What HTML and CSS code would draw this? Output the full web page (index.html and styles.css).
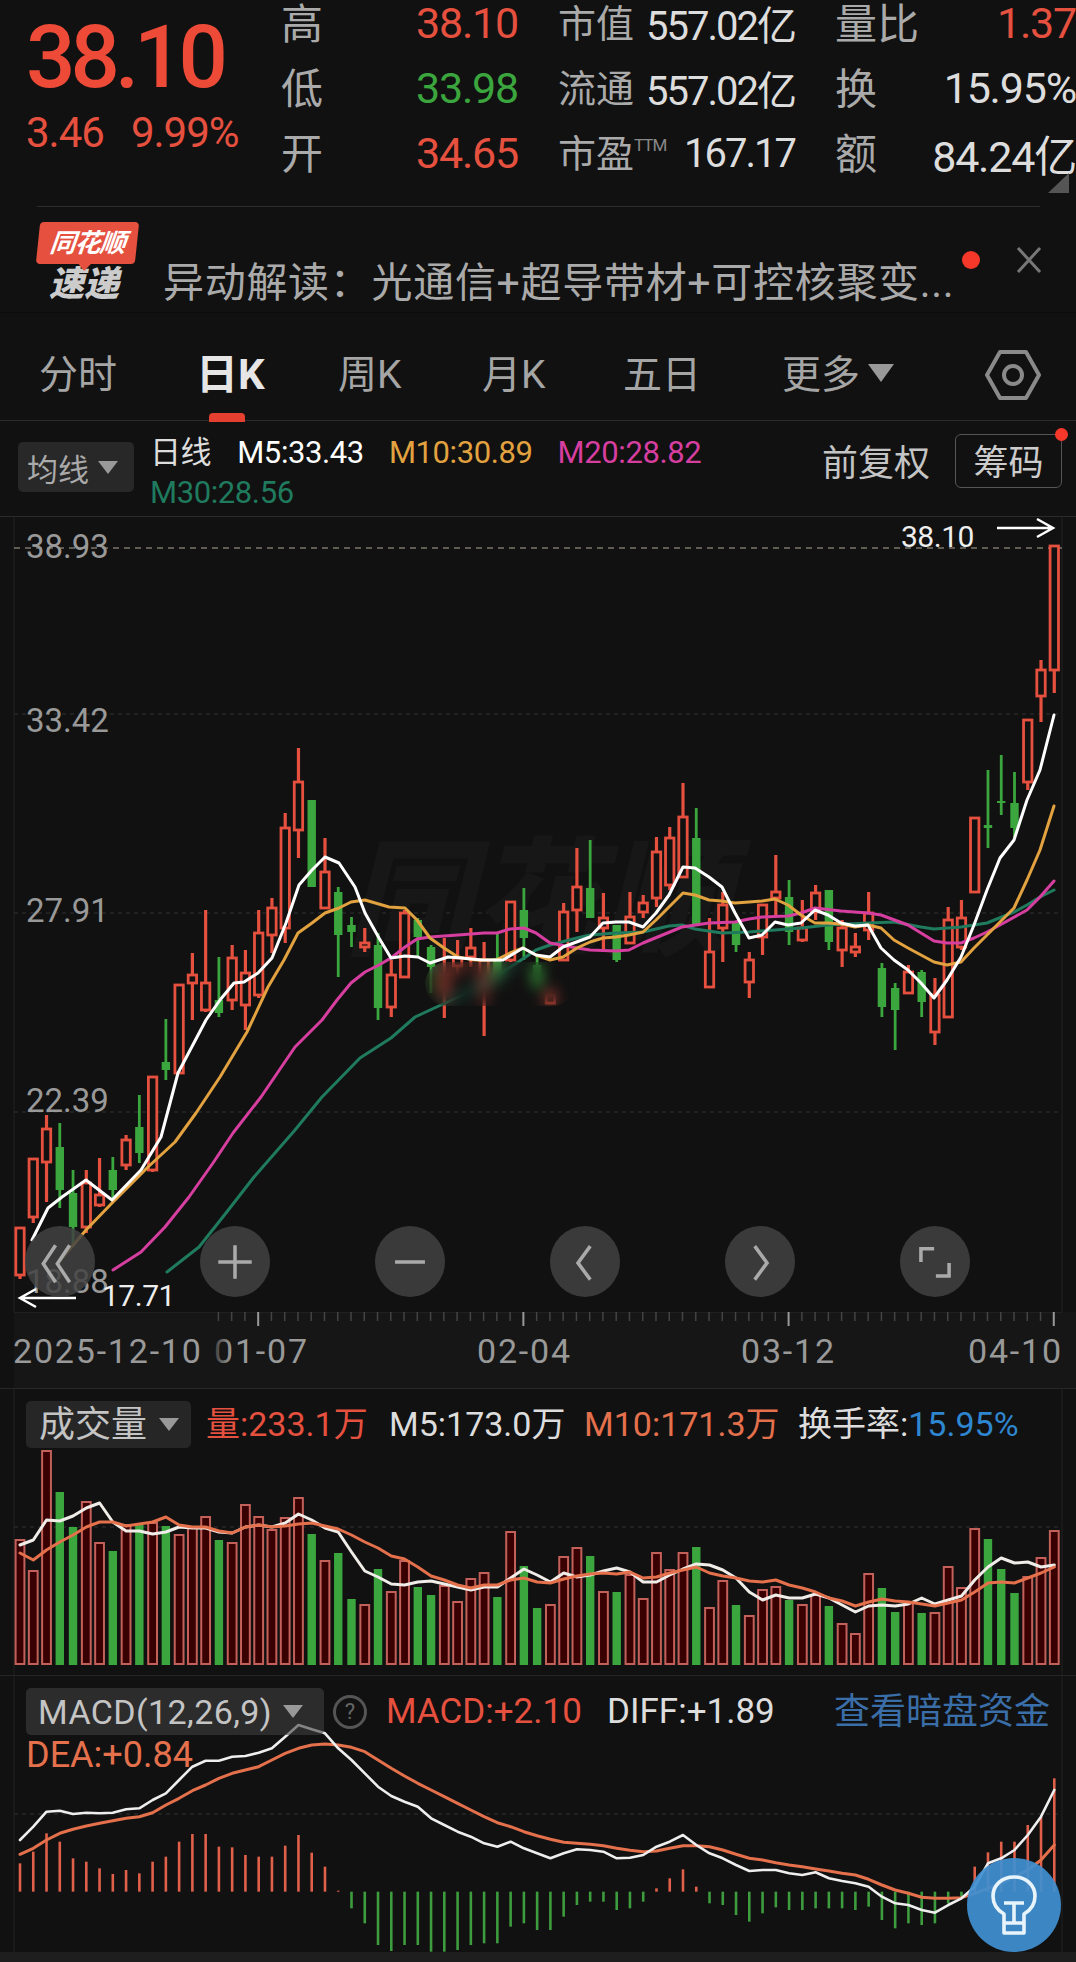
FILE: index.html
```html
<!DOCTYPE html>
<html lang="zh-CN">
<head>
    <meta charset="UTF-8">
    <meta name="viewport" content="width=device-width, initial-scale=1.0">
    <title>日K</title>
    <link rel="stylesheet" href="styles.css">
</head>
<body>
    <header class="quote">
        <div class="last">
            <div class="price">38.10</div>
            <div class="change"><span>3.46</span><span>9.99%</span></div>
        </div>
        <div class="stats">
            <div class="stat big"><span>高</span><b class="up">38.10</b></div>
            <div class="stat"><span>市值</span><b>557.02亿</b></div>
            <div class="stat big"><span>量比</span><b class="up">1.37</b></div>
            <div class="stat big"><span>低</span><b class="down">33.98</b></div>
            <div class="stat"><span>流通</span><b>557.02亿</b></div>
            <div class="stat big"><span>换</span><b>15.95%</b></div>
            <div class="stat big"><span>开</span><b class="up">34.65</b></div>
            <div class="stat"><span>市盈<sup>TTM</sup></span><b>167.17</b></div>
            <div class="stat big"><span>额</span><b>84.24亿</b></div>
        </div>
        <div class="corner"></div>
    </header>
    <div class="divider"></div>

    <section class="notice">
        <div class="logo">
            <div class="logo-top">同花顺</div>
            <div class="logo-bottom">速递</div>
        </div>
        <p class="notice-text">异动解读：光通信+超导带材+可控核聚变...</p>
        <span class="notice-dot"></span>
        <svg class="notice-close" viewBox="0 0 26 26"><path d="M2 1 L24 25 M24 1 L2 25"/></svg>
    </section>

    <nav class="tabs">
        <span class="tab tab-fs">分时</span>
        <span class="tab tab-day active">日K</span>
        <span class="tab tab-week">周K</span>
        <span class="tab tab-month">月K</span>
        <span class="tab tab-five">五日</span>
        <span class="tab tab-more">更多<i class="tri"></i></span>
        <svg class="gear" viewBox="0 0 56 52"><path d="M15 3 H41 L54 26 L41 49 H15 L2 26 Z"/><circle cx="28" cy="26" r="9"/></svg>
    </nav>

    <section class="ma-legend">
        <div class="drop drop-ma">均线<i class="tri"></i></div>
        <div class="ma-values">
            <span class="ma-title">日线</span>
            <span class="c-white">M5:33.43</span>
            <span class="c-orange">M10:30.89</span>
            <span class="c-pink">M20:28.82</span>
            <span class="c-teal">M30:28.56</span>
        </div>
        <span class="adjust">前复权</span>
        <span class="chips">筹码</span>
    </section>

    <section class="panel k-panel">
        <svg class="chart" viewBox="0 517 1076 795" width="1076" height="795">
            <line class="frame" x1="14" y1="517" x2="14" y2="1312"/>
            <line class="frame" x1="1062" y1="517" x2="1062" y2="1312"/>
            <line class="grid-hi" x1="14" y1="548" x2="1062" y2="548"/>
            <line class="grid" x1="14" y1="714" x2="1062" y2="714"/>
            <line class="grid" x1="14" y1="913" x2="1062" y2="913"/>
            <line class="grid" x1="14" y1="1112" x2="1062" y2="1112"/>
            <text class="watermark" x="345" y="945">同花顺</text>
            <g id="k-plot"></g>
            <text class="axis-num" x="26" y="558">38.93</text>
            <text class="axis-num" x="26" y="732">33.42</text>
            <text class="axis-num" x="26" y="922">27.91</text>
            <text class="axis-num" x="26" y="1112">22.39</text>
            <text class="axis-num" x="26" y="1293">18.88</text>
            <text class="mark-num" x="901" y="547">38.10</text>
            <path class="mark-arrow" d="M997 528 H1053 M1037 519 L1053 528 L1037 537"/>
            <text class="mark-num" x="102" y="1306">17.71</text>
            <path class="mark-arrow" d="M76 1298 H20 M36 1289 L20 1298 L36 1307"/>
        </svg>
        <div class="smudge"></div>
        <div class="zoom-bar">
            <span class="round"><svg viewBox="0 0 50 50"><path d="M20 6 L6 27 L20 48 M36 6 L22 27 L36 48"/></svg></span>
            <span class="round"><svg viewBox="0 0 50 50"><path d="M25 6 V44 M6 25 H44"/></svg></span>
            <span class="round"><svg viewBox="0 0 50 50"><path d="M8 25 H42"/></svg></span>
            <span class="round"><svg viewBox="0 0 50 50"><path d="M31 7 L17 26 L31 45"/></svg></span>
            <span class="round"><svg viewBox="0 0 50 50"><path d="M19 7 L33 26 L19 45"/></svg></span>
            <span class="round"><svg viewBox="0 0 50 50"><path d="M24 10 H9 V25 M41 26 V41 H26"/></svg></span>
        </div>
    </section>

    <section class="time-axis">
        <svg viewBox="0 1312 1076 76" width="1076" height="76">
            <defs>
                <linearGradient id="fade">
                    <stop offset="0" stop-color="#161616"/>
                    <stop offset="1" stop-color="#161616" stop-opacity="0"/>
                </linearGradient>
            </defs>
            <g id="ticks"></g>
            <text class="date" x="214" y="1363">01-07</text>
            <rect x="207" y="1330" width="24" height="40" fill="url(#fade)"/>
            <text class="date" x="13" y="1363">2025-12-10</text>
            <text class="date" x="477" y="1363">02-04</text>
            <text class="date" x="741" y="1363">03-12</text>
            <text class="date" x="968" y="1363">04-10</text>
        </svg>
    </section>

    <section class="panel vol-panel">
        <svg class="chart" viewBox="0 1389 1076 286" width="1076" height="286">
            <line class="frame" x1="14" y1="1389" x2="14" y2="1675"/>
            <line class="frame" x1="1062" y1="1389" x2="1062" y2="1675"/>
            <line class="grid" x1="14" y1="1527" x2="1062" y2="1527"/>
            <g id="vol-plot"></g>
        </svg>
        <div class="legend">
            <div class="drop drop-vol">成交量<i class="tri"></i></div>
            <span class="v1 c-red">量:233.1万</span>
            <span class="v2 c-light">M5:173.0万</span>
            <span class="v3 c-coral">M10:171.3万</span>
            <span class="v4 c-light">换手率:<em class="c-blue">15.95%</em></span>
        </div>
    </section>

    <section class="panel macd-panel">
        <svg class="chart" viewBox="0 1676 1076 276" width="1076" height="276">
            <line class="frame" x1="14" y1="1676" x2="14" y2="1952"/>
            <line class="frame" x1="1062" y1="1676" x2="1062" y2="1952"/>
            <line class="grid" x1="14" y1="1814" x2="1062" y2="1814"/>
            <g id="macd-plot"></g>
        </svg>
        <div class="legend macd-legend">
            <div class="drop drop-macd">MACD(12,26,9)<i class="tri"></i></div>
            <span class="help">?</span>
            <span class="m1 c-red">MACD:+2.10</span>
            <span class="m2 c-light">DIFF:+1.89</span>
            <span class="m3">查看暗盘资金</span>
            <span class="m4 c-coral">DEA:+0.84</span>
        </div>
        <svg class="tip" viewBox="0 0 94 94">
            <circle cx="47" cy="47" r="47"/>
            <path d="M37 75 V56 C30 52 26 45 26 38 C26 27 35 19 47 19 C59 19 68 27 68 38 C68 45 64 52 57 56 V75 Z M37 45 H57 M47 45 V65 M37 65 H57"/>
        </svg>
    </section>
    <div class="bottom-band"></div>

    <script src="chart.js"></script>
</body>
</html>
```

FILE: styles.css
```css
* {
    box-sizing: border-box;
}

body {
    font-family: Roboto, "Noto Sans CJK SC", sans-serif;
    margin: 0;
    width: 1076px;
    height: 1962px;
    overflow: hidden;
    background-color: #111;
    color: #aaa;
}

.up, .c-red { color: #e5503f; }
.down { color: #3aa63d; }
.c-white { color: #fff; }
.c-light { color: #ddd; }
.c-orange { color: #e2a23f; }
.c-pink { color: #d63ea0; }
.c-teal { color: #1f7a5e; }
.c-coral { color: #e4704c; }
.c-blue { color: #2f86d0; font-style: normal; }

.tri {
    display: inline-block;
    width: 0;
    height: 0;
    border-left: 10px solid transparent;
    border-right: 10px solid transparent;
    border-top: 13px solid #999;
}

/* top quote */
.quote {
    position: relative;
    display: flex;
    height: 206px;
}

.last {
    width: 281px;
    padding-left: 26px;
    color: #ee4a38;
}

.price {
    font-size: 87px;
    line-height: 87px;
    font-weight: 500;
    letter-spacing: -5px;
    margin-top: 14px;
}

.change {
    display: flex;
    gap: 27px;
    font-size: 42px;
    line-height: 42px;
    letter-spacing: -1px;
    margin-top: 11px;
    color: #e5503f;
}

.stats {
    display: grid;
    grid-template-columns: 237px 237px 241px;
    grid-auto-rows: 46px;
    column-gap: 40px;
    row-gap: 19px;
}

.stat {
    display: flex;
    justify-content: space-between;
    align-items: center;
    font-size: 38px;
    white-space: nowrap;
}

.stat span {
    margin-top: -6px;
}

.stat.big span {
    font-size: 42px;
}

.stat b {
    font-weight: 400;
    font-size: 40px;
    letter-spacing: -2px;
    color: #ddd;
}

.stat.big b {
    font-size: 43px;
    letter-spacing: -1.2px;
}

.stat b.up { color: #e5503f; }
.stat b.down { color: #3aa63d; }

.stat sup {
    font-size: 17px;
    letter-spacing: -1px;
    vertical-align: 16px;
    line-height: 0;
    color: #888;
}

.corner {
    position: absolute;
    right: 7px;
    top: 173px;
    width: 0;
    height: 0;
    border-left: 21px solid transparent;
    border-bottom: 20px solid #555;
}

.divider {
    height: 1px;
    margin: 0 36px 0 37px;
    background-color: #2c2c2c;
}

/* notice */
.notice {
    position: relative;
    display: flex;
    align-items: flex-end;
    height: 106px;
    padding: 0 0 6px 38px;
    border-bottom: 1px solid #0c0c0c;
}

.logo {
    width: 100px;
    margin-bottom: 3px;
}

.logo-top {
    position: relative;
    width: 99px;
    height: 42px;
    background-color: #e5503f;
    border-radius: 4px;
    transform: skewX(-6deg);
    color: #fff;
    font-size: 26px;
    line-height: 42px;
    font-weight: 700;
    font-style: italic;
    text-align: center;
    letter-spacing: -1px;
}

.logo-top::after {
    content: "";
    position: absolute;
    left: 42px;
    bottom: -7px;
    border-left: 7px solid transparent;
    border-right: 7px solid transparent;
    border-top: 8px solid #e5503f;
}

.logo-bottom {
    padding-left: 11px;
    margin-top: 3px;
    color: #ccc;
    font-size: 35px;
    line-height: 36px;
    font-weight: 900;
    font-style: italic;
}

.notice-text {
    margin: 0 0 0 25px;
    font-size: 41px;
    letter-spacing: 0.7px;
    line-height: 46px;
    white-space: nowrap;
    color: #aaa;
}

.notice-dot {
    position: absolute;
    left: 962px;
    top: 44px;
    width: 18px;
    height: 18px;
    border-radius: 50%;
    background-color: #f5382a;
}

.notice-close {
    position: absolute;
    left: 1016px;
    top: 40px;
    width: 26px;
    height: 26px;
}

.notice-close path {
    fill: none;
    stroke: #777;
    stroke-width: 3;
}

/* tabs */
.tabs {
    position: relative;
    display: flex;
    align-items: center;
    height: 108px;
    padding: 8px 0 0 39px;
    border-bottom: 1px solid #2b2b2b;
    font-size: 39px;
    color: #a5a5a5;
}

.tab {
    position: relative;
    white-space: nowrap;
}

.tab-fs { width: 157px; }
.tab-day { width: 142px; }
.tab-week { width: 144px; }
.tab-month { width: 141px; }
.tab-five { width: 159px; }
.tab-more { display: flex; align-items: center; gap: 8px; }

.tab.active {
    color: #e6e6e6;
    font-weight: 700;
    font-size: 42px;
}

.tab.active::after {
    content: "";
    position: absolute;
    left: 13px;
    top: 73px;
    width: 36px;
    height: 9px;
    border-radius: 4px 4px 0 0;
    background-color: #e5402f;
}

.tab-more .tri {
    border-left-width: 13px;
    border-right-width: 13px;
    border-top-width: 18px;
    margin-top: 4px;
}

.gear {
    position: absolute;
    left: 985px;
    top: 36px;
    width: 56px;
    height: 52px;
}

.gear path, .gear circle {
    fill: none;
    stroke: #8a8a8a;
    stroke-width: 4;
    stroke-linejoin: round;
}

/* MA legend */
.ma-legend {
    position: relative;
    height: 95px;
}

.drop {
    position: absolute;
    display: flex;
    align-items: center;
    border-radius: 5px;
    background-color: #282828;
    color: #aaa;
}

.drop-ma {
    left: 18px;
    top: 21px;
    width: 116px;
    height: 50px;
    gap: 9px;
    padding-left: 9px;
    font-size: 31px;
}

.ma-values {
    position: absolute;
    left: 150px;
    top: 12px;
    width: 580px;
    display: flex;
    flex-wrap: wrap;
    column-gap: 25px;
    font-size: 31px;
    line-height: 40px;
    letter-spacing: -0.4px;
}

.ma-title {
    margin-right: 1px;
    color: #ddd;
}

.adjust {
    position: absolute;
    left: 822px;
    top: 18px;
    font-size: 36px;
    line-height: 50px;
    color: #c4c4c4;
}

.chips {
    position: absolute;
    left: 955px;
    top: 13px;
    width: 107px;
    height: 54px;
    border: 1px solid #555;
    border-radius: 6px;
    font-size: 35px;
    line-height: 58px;
    text-align: center;
    color: #ccc;
}

.chips::after {
    content: "";
    position: absolute;
    right: -7px;
    top: -7px;
    width: 13px;
    height: 13px;
    border-radius: 50%;
    background-color: #f5382a;
}

/* chart panels: svg and overlays share one grid cell */
.panel {
    position: relative;
    display: grid;
}

.panel > * {
    grid-area: 1 / 1;
}

.chart {
    display: block;
    overflow: visible;
}

.k-panel {
    height: 796px;
    border-top: 1px solid #2b2b2b;
}

.vol-panel {
    height: 286px;
}

.macd-panel {
    height: 277px;
    border-top: 1px solid #262626;
    overflow: hidden;
}

.frame {
    stroke: #222;
    stroke-width: 1;
}

.grid {
    stroke: #333;
    stroke-width: 1;
    stroke-dasharray: 4 4;
}

.grid-hi {
    stroke: #b0a898;
    stroke-width: 1;
    stroke-dasharray: 6 5;
}

.watermark {
    font-size: 128px;
    font-weight: 900;
    font-style: italic;
    fill: #171717;
}

.axis-num {
    font-size: 33px;
    fill: #999;
}

.mark-num {
    font-size: 30px;
    letter-spacing: -0.5px;
    fill: #eee;
}

.mark-arrow {
    fill: none;
    stroke: #fff;
    stroke-width: 2.5;
}

.smudge {
    position: absolute;
    left: 425px;
    top: 445px;
    width: 150px;
    height: 44px;
    border-radius: 22px;
    backdrop-filter: blur(7px);
}

.zoom-bar {
    display: flex;
    gap: 105px;
    align-self: end;
    padding: 0 0 15px 25px;
}

.round {
    display: flex;
    align-items: center;
    justify-content: center;
    width: 70px;
    height: 71px;
    border-radius: 50%;
    background-color: rgba(66, 66, 66, 0.85);
}

.round svg {
    width: 44px;
    height: 44px;
}

.round path {
    fill: none;
    stroke: #aaa;
    stroke-width: 4;
}

/* time axis */
.time-axis {
    height: 77px;
    background: linear-gradient(to right, #111 14px, #161616 14px);
    border-bottom: 1px solid #272727;
}

.time-axis svg {
    display: block;
}

.date {
    font-size: 34px;
    letter-spacing: 1.8px;
    fill: #999;
}

/* legends above volume and MACD */
.legend {
    position: relative;
    font-size: 34px;
    line-height: 44px;
    white-space: nowrap;
}

.legend > span {
    position: absolute;
    top: 13px;
}

.drop-vol {
    left: 26px;
    top: 12px;
    width: 165px;
    height: 47px;
    gap: 12px;
    padding-left: 13px;
    font-size: 36px;
    color: #c4c4c4;
    background-color: #262626;
}

.v1 { left: 206px; }
.v2 { left: 389px; }
.v3 { left: 584px; }
.v4 { left: 798px; }

.drop-macd {
    left: 26px;
    top: 12px;
    width: 298px;
    height: 47px;
    padding-left: 12px;
    gap: 11px;
    font-size: 34px;
    letter-spacing: 0.4px;
    color: #c4c4c4;
    background-color: rgba(64, 64, 64, 0.6);
}

.help {
    left: 333px;
    width: 34px;
    height: 34px;
    top: 19px !important;
    border: 3px solid #555;
    border-radius: 50%;
    font-size: 22px;
    line-height: 28px;
    text-align: center;
    color: #666;
}

.legend > .m1, .legend > .m2, .legend > .m3 {
    top: 14px;
    font-size: 35px;
}

.m1 { left: 386px; }
.m2 { left: 607px; }
.legend > .m3 { left: 834px; font-size: 36px; color: #3a6ea8; }
.legend > .m4 { left: 26px; top: 57px; font-size: 36px; }

.tip {
    position: absolute;
    left: 967px;
    top: 182px;
    width: 94px;
    height: 94px;
}

.tip circle {
    fill: #3f8fd1;
    fill-opacity: 0.93;
}

.tip path {
    fill: none;
    stroke: #e8f4fb;
    stroke-width: 3.6;
    stroke-linejoin: round;
}

.bottom-band {
    height: 20px;
    background-color: #1e1e1e;
}
```

FILE: chart.js
```js
const RED = "#e5503f";
const GREEN = "#3aa63d";
const SVG_NS = "http://www.w3.org/2000/svg";

const slotX = i => 20 + 13.26 * i;

function add(parent, tag, attrs) {
    const el = document.createElementNS(SVG_NS, tag);
    for (const key in attrs) {
        el.setAttribute(key, attrs[key]);
    }
    parent.appendChild(el);
    return el;
}

function line(parent, points, color, width) {
    add(parent, "polyline", {
        points: points,
        fill: "none",
        stroke: color,
        "stroke-width": width,
        "stroke-linejoin": "round",
        "stroke-linecap": "round"
    });
}

// one y value per day -> polyline points
const byDay = (values, toY) => values.map((v, i) => slotX(i).toFixed(1) + "," + toY(v).toFixed(1)).join(" ");

// [up?, high, open/close top, open/close bottom, low], y in page pixels
const candles = [
    [1,1228,1228,1275,1279],[1,1159,1159,1217,1223],[1,1115,1129,1162,1202],[0,1123,1147,1190,1208],
    [0,1170,1193,1227,1247],[1,1170,1183,1227,1233],[1,1158,1195,1205,1207],[0,1157,1170,1190,1202],
    [1,1135,1140,1165,1170],[0,1095,1127,1153,1163],[1,1076,1077,1170,1172],[0,1019,1062,1070,1080],
    [1,985,985,1073,1073],[1,953,975,983,1020],[1,910,983,1010,1012],[0,957,1000,1013,1017],
    [1,945,958,1000,1010],[1,950,973,1005,1030],[1,910,933,995,998],[1,898,908,935,953],
    [1,813,828,928,943],[1,748,782,830,858],[0,800,800,887,887],[1,838,872,908,908],
    [0,887,892,935,977],[0,917,925,932,947],[1,928,943,947,952],[0,933,945,1008,1020],
    [1,960,975,1007,1017],[1,910,913,977,977],[0,918,920,937,957],[0,945,947,967,993],
    [1,938,975,990,1018],[1,940,958,966,975],[1,928,948,957,967],[1,942,960,985,1036],
    [0,933,958,975,985],[1,902,902,960,962],[0,888,910,938,960],[0,955,965,985,990],
    [1,988,995,1003,1004],[1,903,912,960,960],[1,848,887,910,932],[0,840,888,918,918],
    [1,893,918,928,950],[0,925,925,960,962],[1,892,917,943,943],[1,895,903,912,918],
    [1,837,852,898,907],[1,827,838,885,890],[1,783,817,877,877],[0,808,838,925,925],
    [1,918,952,987,987],[1,892,905,928,962],[0,922,922,945,952],[1,952,960,982,998],
    [1,905,905,937,955],[1,855,892,898,917],[0,880,897,932,945],[1,900,928,940,942],
    [1,885,893,912,920],[0,890,890,942,950],[1,920,928,950,967],[1,933,947,952,957],
    [1,892,913,930,940],[0,963,968,1007,1017],[0,983,988,1010,1050],[1,965,972,993,993],
    [0,970,972,1002,1017],[1,978,995,1032,1045],[1,907,920,1017,1018],[1,900,918,947,950],
    [1,818,818,892,892],[0,770,825,828,848],[0,755,801,803,815],[0,772,803,828,837],
    [1,720,720,782,790],[1,660,670,696,722],[1,546,546,670,693]
];

const m5 = "32,1240 48,1208 62,1197 86,1180 112,1200 141,1170 161,1137 178,1073 206,1020 220,1000 234,983 244,982 258,973 272,958 286,923 299,885 312,870 325,857 339,863 355,887 365,913 379,938 391,958 405,956 418,957 430,963 448,957 461,958 482,960 503,960 523,948 536,955 550,957 563,947 590,937 603,923 616,922 629,922 643,927 656,913 669,895 683,867 695,868 709,877 722,887 735,913 749,938 762,935 775,922 788,925 801,923 815,910 828,915 841,923 855,926 868,925 881,948 894,960 908,970 921,983 934,998 947,980 961,957 974,925 987,890 1000,858 1014,840 1027,800 1040,770 1054,715";
const m10 = "58,1263 86,1230 113,1202 148,1167 175,1142 196,1113 220,1077 247,1032 268,987 284,960 298,933 312,923 325,913 339,908 351,902 365,900 389,907 405,908 417,920 430,938 444,948 458,957 475,960 496,960 510,953 523,948 536,955 550,960 563,957 577,948 590,942 603,938 616,937 629,935 643,932 656,920 669,907 683,893 695,895 709,900 722,901 735,903 749,902 762,901 775,899 788,905 801,915 815,923 828,923 841,924 855,927 868,925 881,928 894,940 908,948 921,955 934,962 947,965 961,962 974,948 987,935 1000,922 1014,908 1027,880 1040,850 1054,806";
const m20 = "113,1270 141,1252 165,1227 189,1197 213,1163 233,1133 261,1097 295,1047 322,1020 337,1000 351,983 365,972 379,965 391,958 405,947 417,939 430,937 458,935 484,933 497,933 510,929 524,928 536,933 550,943 577,948 590,950 616,951 629,950 643,943 682,927 709,923 735,922 749,919 762,917 788,916 801,913 815,908 841,911 868,913 881,915 908,925 934,941 947,943 961,943 974,938 987,932 1000,925 1027,910 1040,897 1054,881";
const m30 = "167,1272 199,1247 226,1213 254,1177 295,1130 322,1097 360,1058 391,1038 415,1017 458,997 496,977 536,950 550,945 577,938 590,935 616,933 643,932 669,926 682,925 695,929 722,933 749,932 775,930 801,928 828,925 868,923 894,922 921,927 934,929 961,927 987,923 1014,912 1027,905 1040,897 1054,890";

const k = document.getElementById("k-plot");
candles.forEach((c, i) => {
    const x = slotX(i);
    const color = c[0] ? RED : GREEN;
    add(k, "line", { x1: x, x2: x, y1: c[1], y2: c[4], stroke: color, "stroke-width": c[0] ? 3.2 : 2.8 });
    if (c[0]) {
        add(k, "rect", { x: x - 4.2, y: c[2], width: 8.4, height: Math.max(c[3] - c[2], 1), fill: "#111", stroke: color, "stroke-width": 2.8 });
    } else {
        add(k, "rect", { x: x - 4.2, y: c[2], width: 8.4, height: Math.max(c[3] - c[2], 2), fill: color });
    }
});
line(k, m30, "#1f7a5e", 3);
line(k, m20, "#d63ea0", 3);
line(k, m10, "#e2a23f", 3);
line(k, m5, "#fff", 3);

// date axis ticks
const ticks = document.getElementById("ticks");
add(ticks, "line", { x1: 14, x2: 1062, y1: 1312, y2: 1312, stroke: "#2b2b2b" });
for (let i = 15; i <= 78; i++) {
    const major = [18, 38, 58, 78].includes(i);
    add(ticks, "line", {
        x1: slotX(i) - 0.5, x2: slotX(i) - 0.5, y1: 1312, y2: major ? 1326 : 1321,
        stroke: major ? "#999" : "#444", "stroke-width": major ? 2 : 1.5
    });
}

// volume: top of each bar, then the two moving averages
const volTops = [1540,1571,1451,1492,1527,1502,1543,1551,1525,1525,1523,1526,1535,1528,1517,1540,1543,1505,1517,1530,1518,1498,1534,1561,1553,1599,1605,1569,1592,1561,1587,1595,1586,1602,1579,1573,1597,1532,1566,1608,1605,1557,1548,1556,1592,1592,1575,1599,1553,1570,1553,1547,1608,1581,1605,1616,1590,1587,1600,1605,1595,1606,1624,1634,1574,1588,1612,1603,1613,1613,1567,1588,1529,1539,1569,1593,1577,1558,1531];
const volM5 = [1545,1540,1520,1521,1516,1508,1503,1522,1531,1531,1534,1532,1527,1528,1528,1532,1533,1527,1525,1527,1523,1514,1520,1528,1532,1552,1571,1577,1584,1585,1582,1581,1584,1587,1590,1587,1587,1578,1569,1575,1582,1573,1577,1575,1571,1568,1572,1582,1582,1575,1569,1564,1565,1570,1578,1592,1600,1595,1598,1598,1594,1598,1605,1612,1606,1605,1606,1604,1598,1604,1600,1596,1580,1567,1558,1563,1562,1567,1565];
const volM10 = [1553,1560,1550,1542,1535,1527,1522,1522,1526,1524,1522,1517,1525,1527,1527,1531,1533,1527,1525,1527,1526,1524,1523,1526,1529,1535,1542,1548,1556,1559,1567,1576,1580,1585,1588,1585,1585,1580,1578,1582,1583,1579,1576,1574,1573,1574,1572,1578,1577,1573,1570,1567,1573,1576,1578,1581,1582,1580,1585,1588,1592,1598,1601,1606,1602,1599,1601,1602,1604,1606,1603,1600,1592,1583,1582,1583,1578,1573,1567];

const vol = document.getElementById("vol-plot");
volTops.forEach((top, i) => {
    const x = slotX(i);
    if (candles[i][0]) {
        add(vol, "rect", { x: x - 4.4, y: top, width: 8.8, height: 1664 - top, fill: "#380000", stroke: "#c4605a", "stroke-width": 2 });
    } else {
        add(vol, "rect", { x: x - 4.2, y: top, width: 8.4, height: 1665 - top, fill: GREEN });
    }
});
line(vol, byDay(volM5, v => v), "#f0ece8", 3);
line(vol, byDay(volM10, v => v), "#e4704c", 3);

// MACD values are measured on a 3x crop, macdY brings them back to page pixels
const macdY = v => 1670 + v / 3;
const macdZero = 665;
const macdBars = [580,545,490,515,565,575,595,612,600,610,575,560,515,492,492,530,532,555,560,560,527,495,548,590,662,715,760,825,843,825,825,845,845,840,825,820,820,770,760,780,780,740,705,695,695,720,715,695,655,625,598,650,700,705,735,755,730,712,720,720,715,715,715,720,710,750,775,760,765,760,700,680,590,547,515,515,465,440,325];
const diff = [510,470,425,422,432,428,430,428,418,415,390,370,330,290,272,272,260,258,248,235,200,165,178,190,235,270,310,350,378,395,410,445,465,485,500,520,530,515,535,550,565,550,538,540,545,565,563,555,530,515,495,525,550,565,585,603,600,600,610,615,607,625,633,640,650,680,700,705,720,728,705,685,650,580,565,540,495,440,360];
const dea = [553,535,510,490,478,468,460,452,445,440,428,405,385,362,345,325,310,300,290,270,250,235,225,222,225,232,245,270,295,318,340,360,380,400,420,440,458,470,485,497,508,517,520,523,527,535,541,545,543,535,527,527,530,540,553,565,570,578,585,590,597,603,610,615,628,645,660,670,682,685,685,683,670,655,640,620,600,570,525];

const macd = document.getElementById("macd-plot");
macdBars.forEach((v, i) => {
    const x = slotX(i);
    add(macd, "line", {
        x1: x, x2: x, y1: macdY(macdZero), y2: macdY(v),
        stroke: v < macdZero ? "#e0604a" : "#3d9c3d", "stroke-width": 2.6
    });
});
line(macd, byDay(dea, macdY), "#e4704c", 3);
line(macd, byDay(diff, macdY), "#eee", 2.6);
```
